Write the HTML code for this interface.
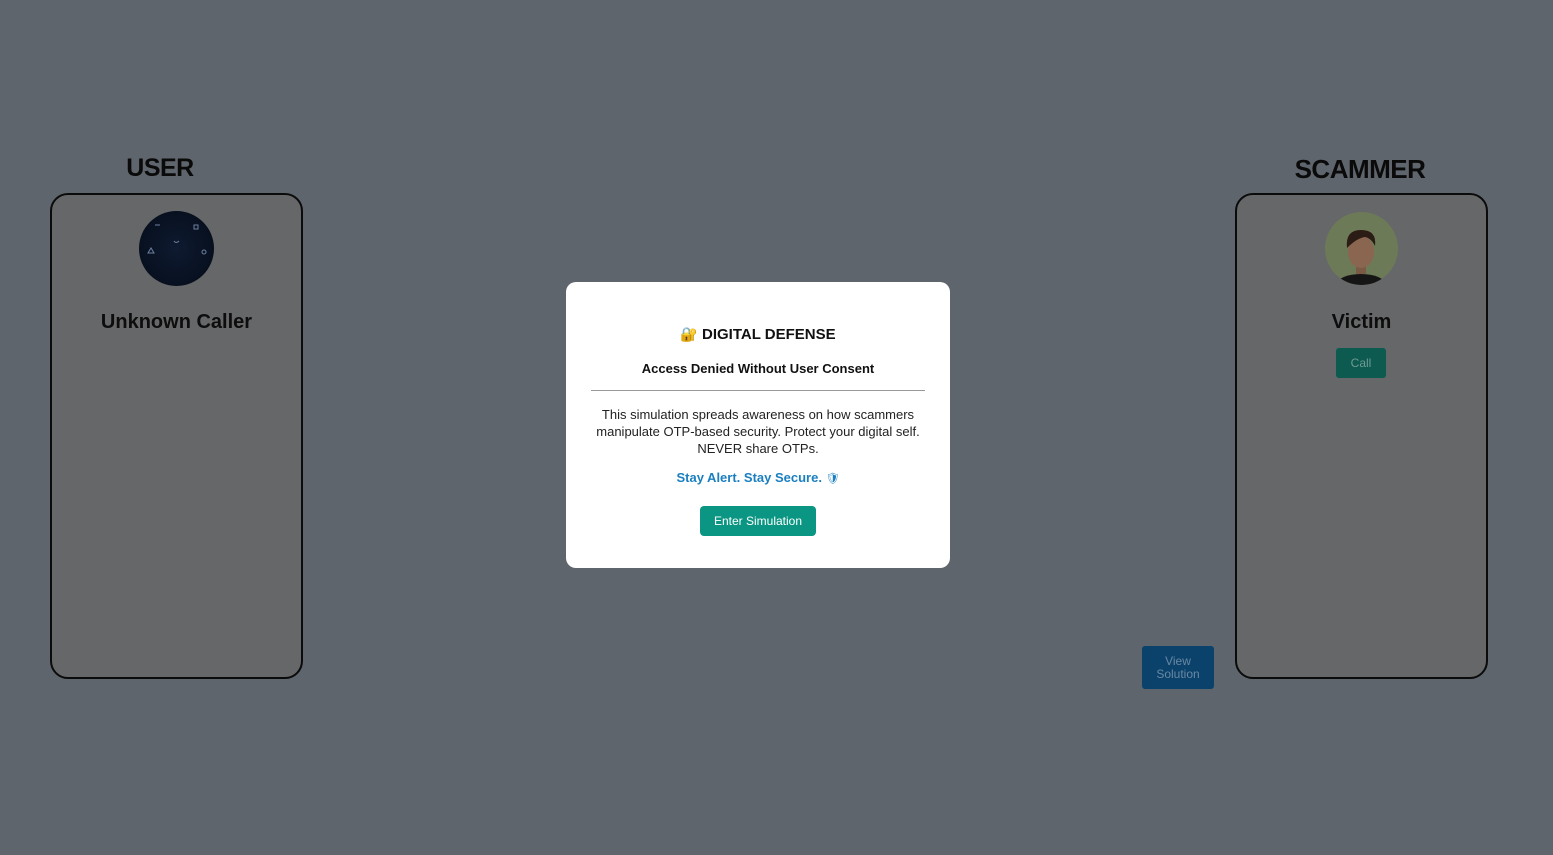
<!DOCTYPE html>
<html><head><meta charset="utf-8"><style>
*{box-sizing:border-box;margin:0;padding:0}
body{width:1553px;height:855px;background:#5f656c;font-family:"Liberation Sans","DejaVu Sans",sans-serif;position:relative;overflow:hidden}
.h{position:absolute;font-weight:bold;font-size:26px;color:#0a0a0a;text-align:center;top:154px}
.card{position:absolute;top:193px;width:253px;height:486px;border:2px solid #0b0b0b;border-radius:18px;background:#666769}
.name{position:absolute;width:100%;text-align:center;top:116px;font-weight:bold;font-size:20px;color:#0d0d0d}
.av{position:absolute;left:87px;top:16px;width:75px;height:75px;border-radius:50%}
.modal{position:absolute;left:566px;top:282px;width:384px;height:286px;background:#fff;border-radius:10px;text-align:center}
</style></head><body>
<div class="h" style="left:100px;width:120px;font-size:25px;letter-spacing:-0.5px">USER</div>
<div class="h" style="left:1280px;width:160px;letter-spacing:-0.5px">SCAMMER</div>
<div class="card" style="left:50px">
 <div class="av" style="background:radial-gradient(circle,#0e1a30,#050c18)">
  <svg width="75" height="75" viewBox="0 0 75 75" fill="none" stroke="#6d7fa0" stroke-width="1"><path d="M16 14h5M55 14v4h4v-4zM9 42l3-5 3 5z"/><circle cx="65" cy="41" r="2"/><path d="M35 30q2 3 5 0"/></svg>
 </div>
 <div class="name">Unknown Caller</div>
</div>
<div class="card" style="left:1235px">
 <div class="av" style="left:88px;top:17px;width:73px;height:73px;background:#6d7a57;overflow:hidden">
  <svg width="73" height="73" viewBox="0 0 73 73"><ellipse cx="36" cy="72" rx="24" ry="10" fill="#151515"/><rect x="31" y="50" width="10" height="12" fill="#7a5a45"/><ellipse cx="36" cy="40" rx="13" ry="16" fill="#8a6650"/><path d="M22 36q-2-18 14-18q16 0 14 16q-4-8-10-9q-8 1-18 11z" fill="#2b1c15"/></svg>
 </div>
 <div class="name">Victim</div>
 <div style="position:absolute;left:99px;top:153px;width:50px;height:30px;background:#0c5a50;border-radius:3px;color:#6f9a94;font-size:12px;line-height:30px;text-align:center">Call</div>
</div>
<div style="position:absolute;left:1142px;top:646px;width:72px;height:43px;background:#0a426c;border-radius:3px;color:#6a88a2;font-size:12px;line-height:13px;text-align:center;padding-top:9px">View<br>Solution</div>
<div class="modal">
 <div style="position:absolute;top:44px;width:100%;font-weight:bold;font-size:15px;color:#111"><span style="font-size:14px">🔐</span> DIGITAL DEFENSE</div>
 <div style="position:absolute;top:79px;width:100%;font-weight:bold;font-size:13px;color:#111">Access Denied Without User Consent</div>
 <div style="position:absolute;left:25px;right:25px;top:108px;border-top:1px solid #999"></div>
 <div style="position:absolute;top:124px;width:100%;font-size:13px;line-height:17px;color:#222">This simulation spreads awareness on how scammers<br>manipulate OTP-based security. Protect your digital self.<br>NEVER share OTPs.</div>
 <div style="position:absolute;top:188px;width:100%;font-weight:bold;font-size:13px;color:#1a7fc0">Stay Alert. Stay Secure. <span style="font-weight:normal;font-size:11px">🛡</span></div>
 <div style="position:absolute;left:134px;top:224px;width:116px;height:30px;background:#0b9683;border-radius:4px;color:#fff;font-size:12px;line-height:30px">Enter Simulation</div>
</div>
</body></html>
